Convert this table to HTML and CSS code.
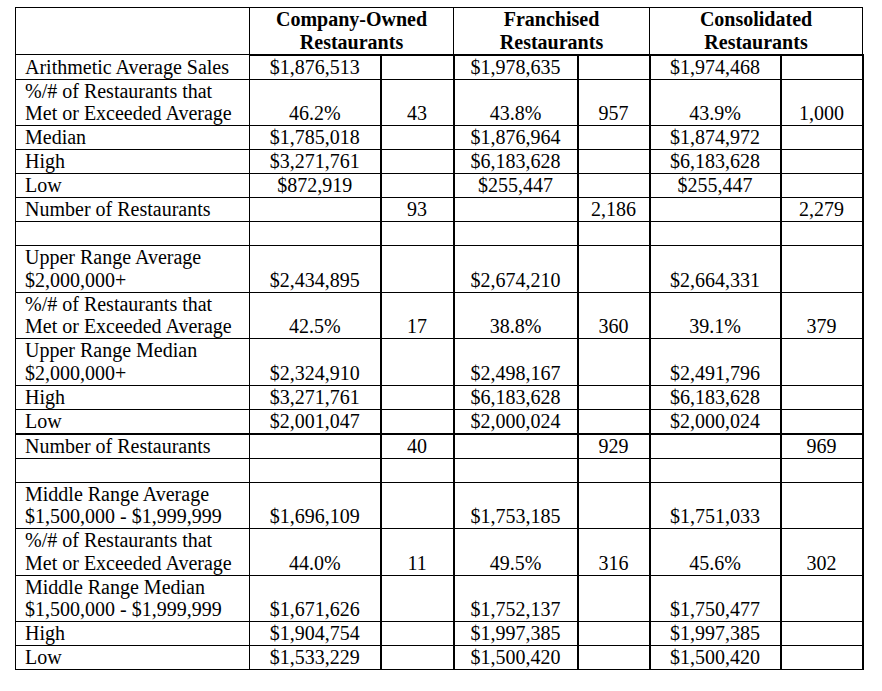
FILE: index.html
```html
<!DOCTYPE html>
<html>
<head>
<meta charset="utf-8">
<link rel="stylesheet" href="styles.css">
</head>
<body>
<div class="page">
<table class="stats">
  <colgroup>
    <col class="c-label"><col class="c-val"><col class="c-num">
    <col class="c-val2"><col class="c-num2"><col class="c-val"><col class="c-num3">
  </colgroup>
  <thead>
    <tr>
      <th class="blank-head"></th>
      <th colspan="2" class="grp">Company-Owned<br>Restaurants</th>
      <th colspan="2" class="grp">Franchised<br>Restaurants</th>
      <th colspan="2" class="grp last">Consolidated<br>Restaurants</th>
    </tr>
  </thead>
  <tbody>
    <tr class="first"><td class="lbl">Arithmetic Average Sales</td><td>$1,876,513</td><td class="n"></td><td class="v">$1,978,635</td><td class="n"></td><td class="v">$1,974,468</td><td class="n r"></td></tr>
    <tr><td class="lbl">%/# of Restaurants that<br>Met or Exceeded Average</td><td>46.2%</td><td class="n">43</td><td class="v">43.8%</td><td class="n">957</td><td class="v">43.9%</td><td class="n r">1,000</td></tr>
    <tr><td class="lbl">Median</td><td>$1,785,018</td><td class="n"></td><td class="v">$1,876,964</td><td class="n"></td><td class="v">$1,874,972</td><td class="n r"></td></tr>
    <tr><td class="lbl">High</td><td>$3,271,761</td><td class="n"></td><td class="v">$6,183,628</td><td class="n"></td><td class="v">$6,183,628</td><td class="n r"></td></tr>
    <tr><td class="lbl">Low</td><td>$872,919</td><td class="n"></td><td class="v">$255,447</td><td class="n"></td><td class="v">$255,447</td><td class="n r"></td></tr>
    <tr><td class="lbl">Number of Restaurants</td><td></td><td class="n">93</td><td class="v"></td><td class="n">2,186</td><td class="v"></td><td class="n r">2,279</td></tr>
    <tr><td class="lbl">&nbsp;</td><td></td><td class="n"></td><td class="v"></td><td class="n"></td><td class="v"></td><td class="n r"></td></tr>

    <tr><td class="lbl">Upper Range Average<br>$2,000,000+</td><td>$2,434,895</td><td class="n"></td><td class="v">$2,674,210</td><td class="n"></td><td class="v">$2,664,331</td><td class="n r"></td></tr>
    <tr><td class="lbl">%/# of Restaurants that<br>Met or Exceeded Average</td><td>42.5%</td><td class="n">17</td><td class="v">38.8%</td><td class="n">360</td><td class="v">39.1%</td><td class="n r">379</td></tr>
    <tr><td class="lbl">Upper Range Median<br>$2,000,000+</td><td>$2,324,910</td><td class="n"></td><td class="v">$2,498,167</td><td class="n"></td><td class="v">$2,491,796</td><td class="n r"></td></tr>
    <tr><td class="lbl">High</td><td>$3,271,761</td><td class="n"></td><td class="v">$6,183,628</td><td class="n"></td><td class="v">$6,183,628</td><td class="n r"></td></tr>
    <tr><td class="lbl">Low</td><td>$2,001,047</td><td class="n"></td><td class="v">$2,000,024</td><td class="n"></td><td class="v">$2,000,024</td><td class="n r"></td></tr>
    <tr class="thick-top"><td class="lbl">Number of Restaurants</td><td></td><td class="n">40</td><td class="v"></td><td class="n">929</td><td class="v"></td><td class="n r">969</td></tr>
    <tr><td class="lbl">&nbsp;</td><td></td><td class="n"></td><td class="v"></td><td class="n"></td><td class="v"></td><td class="n r"></td></tr>

    <tr><td class="lbl">Middle Range Average<br>$1,500,000 - $1,999,999</td><td>$1,696,109</td><td class="n"></td><td class="v">$1,753,185</td><td class="n"></td><td class="v">$1,751,033</td><td class="n r"></td></tr>
    <tr><td class="lbl">%/# of Restaurants that<br>Met or Exceeded Average</td><td>44.0%</td><td class="n">11</td><td class="v">49.5%</td><td class="n">316</td><td class="v">45.6%</td><td class="n r">302</td></tr>
    <tr><td class="lbl">Middle Range Median<br>$1,500,000 - $1,999,999</td><td>$1,671,626</td><td class="n"></td><td class="v">$1,752,137</td><td class="n"></td><td class="v">$1,750,477</td><td class="n r"></td></tr>
    <tr><td class="lbl">High</td><td>$1,904,754</td><td class="n"></td><td class="v">$1,997,385</td><td class="n"></td><td class="v">$1,997,385</td><td class="n r"></td></tr>
    <tr><td class="lbl">Low</td><td>$1,533,229</td><td class="n"></td><td class="v">$1,500,420</td><td class="n"></td><td class="v">$1,500,420</td><td class="n r"></td></tr>
  </tbody>
</table>
</div>
</body>
</html>
```
FILE: styles.css
```css
html, body {
  margin: 0;
  padding: 0;
  background: #ffffff;
}
.page {
  padding: 7px 0 0 15px;
}
.stats {
  border-collapse: collapse;
  table-layout: fixed;
  width: 847px;
  font-family: "Liberation Serif", "Times New Roman", serif;
  font-size: 20px;
  line-height: 22.75px;
  color: #000;
}
.c-label { width: 234px; }
.c-val { width: 131px; }
.c-num { width: 73px; }
.c-val2 { width: 124px; }
.c-num2 { width: 72px; }
.c-num3 { width: 82px; }

.stats th, .stats td {
  border: 1px solid #000;
  padding: 0;
  text-align: center;
  vertical-align: bottom;
  white-space: nowrap;
  overflow: hidden;
}
.stats th {
  font-weight: bold;
  vertical-align: top;
  height: 45px;
}
.stats th.grp {
  border-bottom: 2px solid #000;
}
.stats td {
  height: 23px;
}
.stats td.lbl {
  text-align: left;
  padding-left: 9px;
}
.stats td.n {
  border-left: 2px solid #000;
}
.stats td.v {
  border-left: 2px solid #000;
}
.stats td.r {
  border-right: 2px solid #000;
}
.stats tr.thick-top td {
  border-top: 2px solid #000;
}
```
